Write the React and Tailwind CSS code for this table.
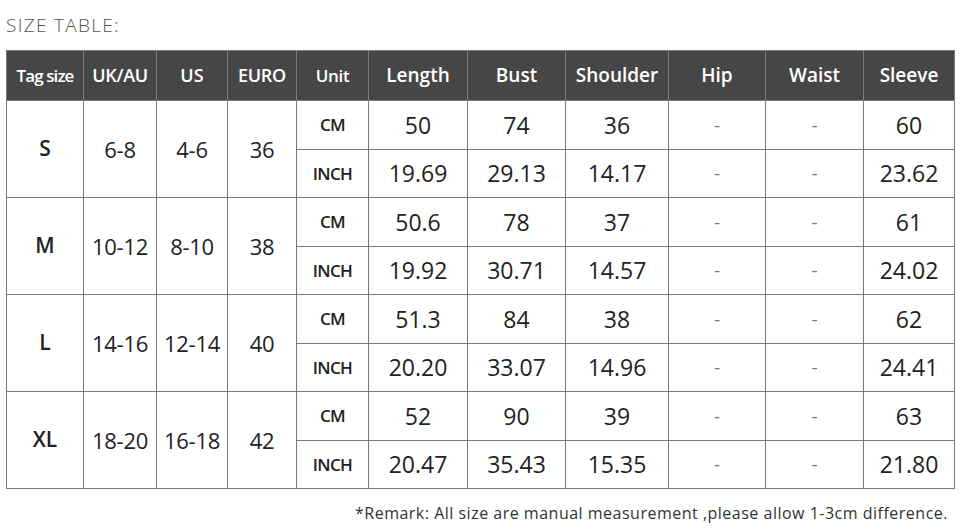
import React from 'react';

const cols = [
  { label: 'Tag size', w: 'w-[77px]', size: 'text-[17px] tracking-[-0.9px]' },
  { label: 'UK/AU', w: 'w-[73px]', size: 'text-[18px] tracking-[-0.3px]' },
  { label: 'US', w: 'w-[71px]', size: 'text-[18px]' },
  { label: 'EURO', w: 'w-[69px]', size: 'text-[18px] tracking-[-0.3px]' },
  { label: 'Unit', w: 'w-[72px]', size: 'text-[17px] tracking-[-0.3px]' },
  { label: 'Length', w: 'w-[99px]', size: 'text-[19px]' },
  { label: 'Bust', w: 'w-[98px]', size: 'text-[19px]' },
  { label: 'Shoulder', w: 'w-[103px]', size: 'text-[19px]' },
  { label: 'Hip', w: 'w-[97px]', size: 'text-[19px]' },
  { label: 'Waist', w: 'w-[98px]', size: 'text-[19px]' },
  { label: 'Sleeve', w: 'w-[91px]', size: 'text-[19px]' },
];

const sizes = [
  { tag: 'S', uk: '6-8', us: '4-6', euro: '36', cm: ['50', '74', '36', '-', '-', '60'], inch: ['19.69', '29.13', '14.17', '-', '-', '23.62'] },
  { tag: 'M', uk: '10-12', us: '8-10', euro: '38', cm: ['50.6', '78', '37', '-', '-', '61'], inch: ['19.92', '30.71', '14.57', '-', '-', '24.02'] },
  { tag: 'L', uk: '14-16', us: '12-14', euro: '40', cm: ['51.3', '84', '38', '-', '-', '62'], inch: ['20.20', '33.07', '14.96', '-', '-', '24.41'] },
  { tag: 'XL', uk: '18-20', us: '16-18', euro: '42', cm: ['52', '90', '39', '-', '-', '63'], inch: ['20.47', '35.43', '15.35', '-', '-', '21.80'] },
];

const cell = 'border border-[#7a7a7a] text-center p-0';
const group = `${cell} text-[22px] font-medium text-[#222] tracking-[-0.3px]`;
const unit = `${cell} text-[17px] font-semibold text-[#222] tracking-[-0.7px]`;

const Values = ({ values }) =>
  values.map((v, i) => (
    <td
      key={i}
      className={`${cell} ${v === '-' ? 'text-[19px] text-[#777]' : 'text-[23px] text-[#222]'}`}
    >
      {v}
    </td>
  ));

export default function App() {
  return (
    <div className="w-[971px] h-[531px] bg-white relative font-['Open_Sans',sans-serif] overflow-hidden">
      <div className="pl-[6px] pt-[12px] h-[50px] text-[19px] font-light text-[#555] tracking-[1.3px] leading-[26px]">
        SIZE TABLE:
      </div>
      <table className="ml-[6px] border-collapse table-fixed w-[948px]">
        <thead>
          <tr className="h-[50px] bg-[#464646]">
            {cols.map((c) => (
              <th
                key={c.label}
                className={`${c.w} ${cell} border-[#3a3a3a] text-white font-semibold ${c.size}`}
              >
                {c.label}
              </th>
            ))}
          </tr>
        </thead>
        <tbody>
          {sizes.map((s) => (
            <React.Fragment key={s.tag}>
              <tr className="h-[48.5px]">
                <td rowSpan={2} className={`${cell} text-[21px] font-semibold text-[#222]`}>{s.tag}</td>
                <td rowSpan={2} className={group}>{s.uk}</td>
                <td rowSpan={2} className={group}>{s.us}</td>
                <td rowSpan={2} className={group}>{s.euro}</td>
                <td className={unit}>CM</td>
                <Values values={s.cm} />
              </tr>
              <tr className="h-[48.5px]">
                <td className={unit}>INCH</td>
                <Values values={s.inch} />
              </tr>
            </React.Fragment>
          ))}
        </tbody>
      </table>
      <div className="absolute right-[23px] bottom-[7px] text-[16px] text-[#333] tracking-[0.5px] leading-[22px]">
        *Remark: All size are manual measurement ,please allow 1-3cm difference.
      </div>
    </div>
  );
}
